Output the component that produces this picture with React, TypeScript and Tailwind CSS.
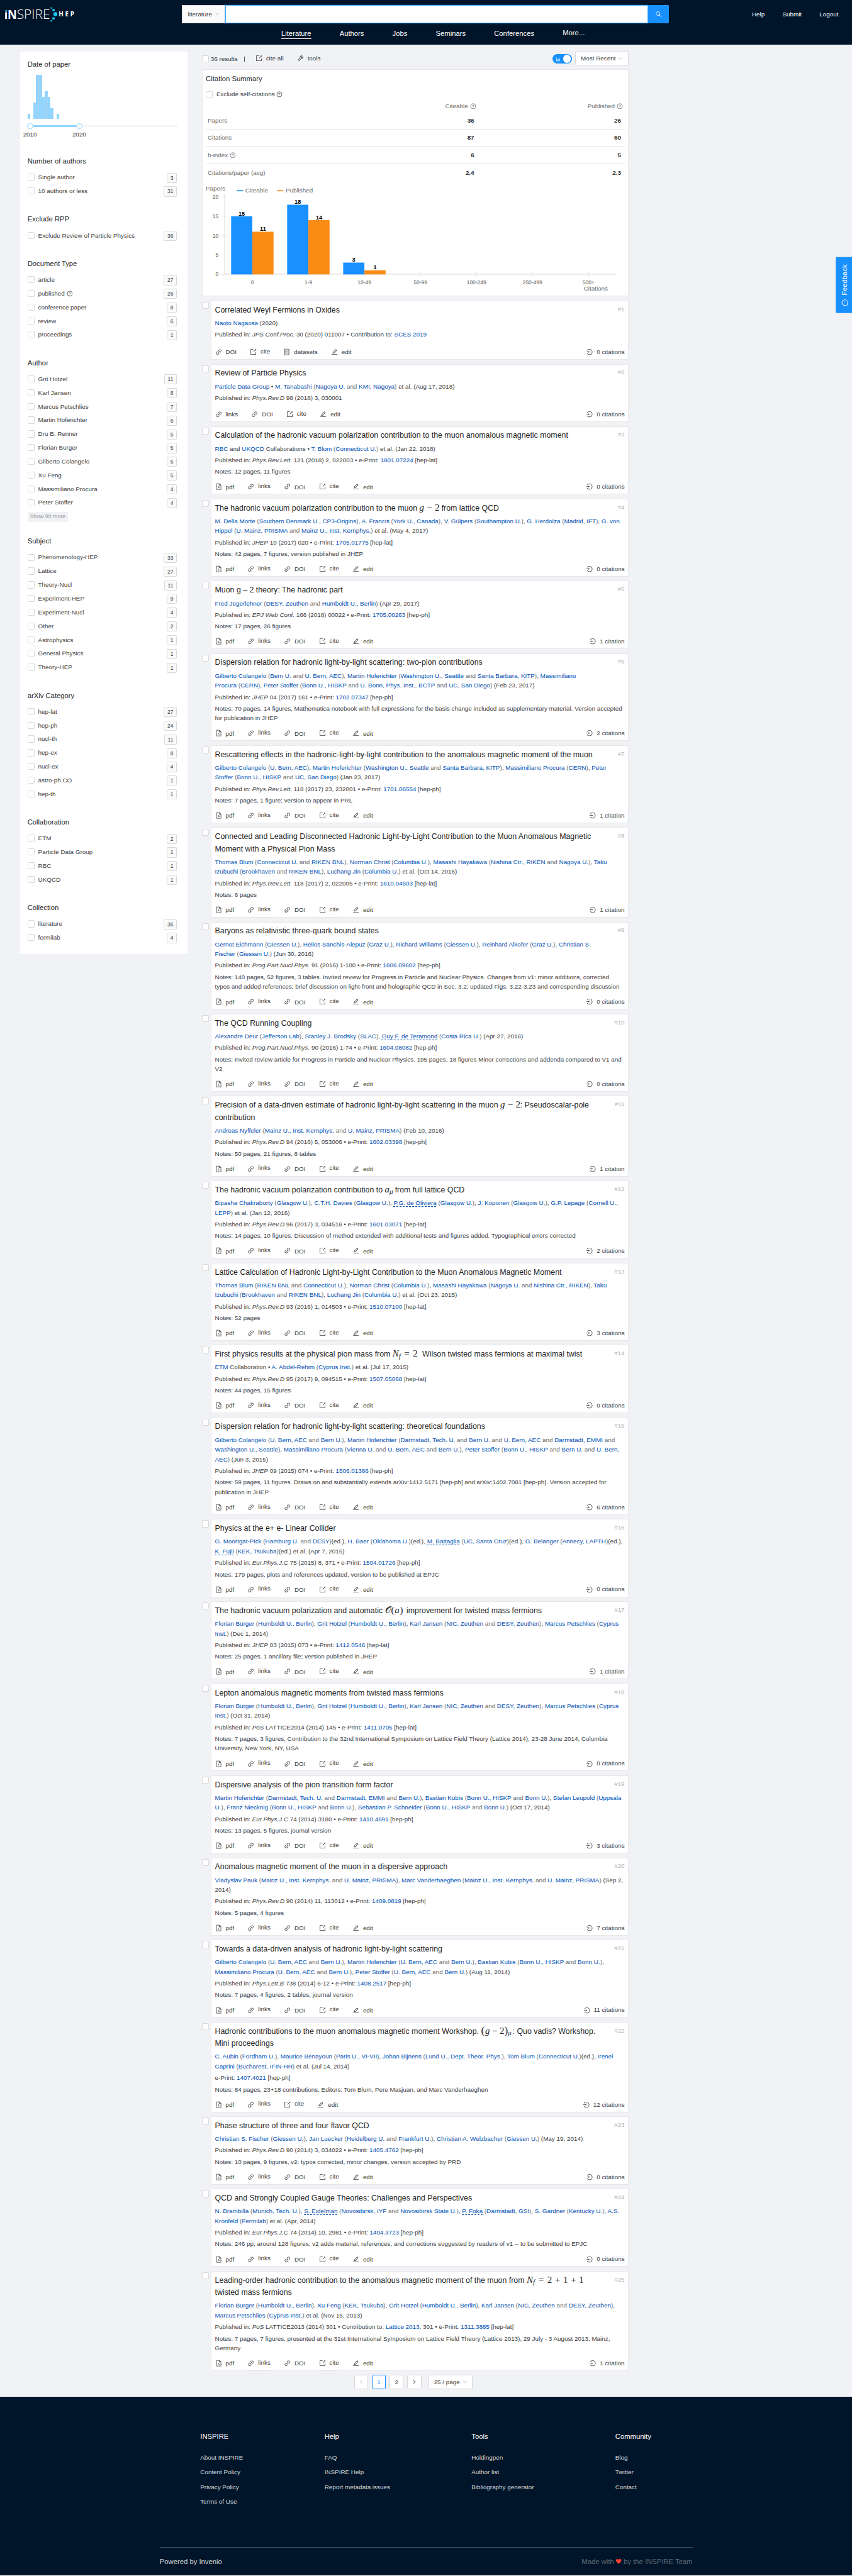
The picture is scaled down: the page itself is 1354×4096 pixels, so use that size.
import React from "react";
import {
  AiOutlineBarChart,
  AiOutlineDatabase,
  AiOutlineDown,
  AiOutlineEdit,
  AiOutlineExport,
  AiOutlineFilePdf,
  AiOutlineLeft,
  AiOutlineLink,
  AiOutlineLogin,
  AiOutlineMessage,
  AiOutlineQuestionCircle,
  AiOutlineRight,
  AiOutlineSearch,
  AiOutlineTool,
} from "react-icons/ai";

/* ---------- data ---------- */

type Paper = {
  title: React.ReactNode;
  collab?: string;
  authors: string;
  tail: string;
  pub: string;
  notes?: string;
  actions?: string[];
  cites: number;
  footer?: string;
};

const MATH = "font-['Liberation_Serif',serif] whitespace-nowrap inline-block leading-[0] text-[1.21em]";

function GMinus2() {
  return (
    <span className={MATH + " w-[45px]"}>
      <i>g</i>
      <span className="mx-[0.29em]">−</span>2
    </span>
  );
}

const papers: Paper[] = [
  {
    title: "Correlated Weyl Fermions in Oxides",
    authors: "Naoto Nagaosa",
    tail: " (2020)",
    pub: "Published in: *JPS Conf.Proc.* 30 (2020) 011007 • Contribution to: {SCES 2019}",
    actions: ["DOI", "cite", "datasets", "edit"],
    cites: 0,
    footer: "pt-[12.3px]",
  },
  {
    title: "Review of Particle Physics",
    collab: "{Particle Data Group} • ",
    authors: "M. Tanabashi (Nagoya U. & KMI, Nagoya)",
    tail: " et al. (Aug 17, 2018)",
    pub: "Published in: *Phys.Rev.D* 98 (2018) 3, 030001",
    actions: ["link", "DOI", "cite", "edit"],
    cites: 0,
    footer: "pt-[10px]",
  },
  {
    title: "Calculation of the hadronic vacuum polarization contribution to the muon anomalous magnetic moment",
    collab: "{RBC} and {UKQCD} Collaborations • ",
    authors: "T. Blum (Connecticut U.)",
    tail: " et al. (Jan 22, 2018)",
    pub: "Published in: *Phys.Rev.Lett.* 121 (2018) 2, 022003 • e-Print: {1801.07224} [hep-lat]",
    notes: "12 pages, 11 figures",
    cites: 0,
  },
  {
    title: (
      <>
        The hadronic vacuum polarization contribution to the muon <GMinus2 /> from lattice QCD
      </>
    ),
    authors:
      "M. Della Morte (Southern Denmark U., CP3-Origins); A. Francis (York U., Canada); V. Gülpers (Southampton U.); G. Herdoíza (Madrid, IFT); G. von\nHippel (U. Mainz, PRISMA & Mainz U., Inst. Kernphys.)",
    tail: " et al. (May 4, 2017)",
    pub: "Published in: *JHEP* 10 (2017) 020 • e-Print: {1705.01775} [hep-lat]",
    notes: "42 pages, 7 figures, version published in JHEP",
    cites: 0,
  },
  {
    title: "Muon g – 2 theory: The hadronic part",
    authors: "Fred Jegerlehner (DESY, Zeuthen & Humboldt U., Berlin)",
    tail: " (Apr 29, 2017)",
    pub: "Published in: *EPJ Web Conf.* 166 (2018) 00022 • e-Print: {1705.00263} [hep-ph]",
    notes: "17 pages, 26 figures",
    cites: 1,
  },
  {
    title: "Dispersion relation for hadronic light-by-light scattering: two-pion contributions",
    authors:
      "Gilberto Colangelo (Bern U. & U. Bern, AEC); Martin Hoferichter (Washington U., Seattle & Santa Barbara, KITP); Massimiliano\nProcura (CERN); Peter Stoffer (Bonn U., HISKP & U. Bonn, Phys. Inst., BCTP & UC, San Diego)",
    tail: " (Feb 23, 2017)",
    pub: "Published in: *JHEP* 04 (2017) 161 • e-Print: {1702.07347} [hep-ph]",
    notes:
      "70 pages, 14 figures, Mathematica notebook with full expressions for the basis change included as supplementary material. Version accepted for publication in JHEP",
    cites: 2,
  },
  {
    title: "Rescattering effects in the hadronic-light-by-light contribution to the anomalous magnetic moment of the muon",
    authors:
      "Gilberto Colangelo (U. Bern, AEC); Martin Hoferichter (Washington U., Seattle & Santa Barbara, KITP); Massimiliano Procura (CERN); Peter\nStoffer (Bonn U., HISKP & UC, San Diego)",
    tail: " (Jan 23, 2017)",
    pub: "Published in: *Phys.Rev.Lett.* 118 (2017) 23, 232001 • e-Print: {1701.06554} [hep-ph]",
    notes: "7 pages, 1 figure; version to appear in PRL",
    cites: 1,
  },
  {
    title:
      "Connected and Leading Disconnected Hadronic Light-by-Light Contribution to the Muon Anomalous Magnetic Moment with a Physical Pion Mass",
    authors:
      "Thomas Blum (Connecticut U. & RIKEN BNL); Norman Christ (Columbia U.); Masashi Hayakawa (Nishina Ctr., RIKEN & Nagoya U.); Taku\nIzubuchi (Brookhaven & RIKEN BNL); Luchang Jin (Columbia U.)",
    tail: " et al. (Oct 14, 2016)",
    pub: "Published in: *Phys.Rev.Lett.* 118 (2017) 2, 022005 • e-Print: {1610.04603} [hep-lat]",
    notes: "6 pages",
    cites: 1,
  },
  {
    title: "Baryons as relativistic three-quark bound states",
    authors:
      "Gernot Eichmann (Giessen U.); Helios Sanchis-Alepuz (Graz U.); Richard Williams (Giessen U.); Reinhard Alkofer (Graz U.); Christian S.\nFischer (Giessen U.)",
    tail: " (Jun 30, 2016)",
    pub: "Published in: *Prog.Part.Nucl.Phys.* 91 (2016) 1-100 • e-Print: {1606.09602} [hep-ph]",
    notes:
      "140 pages, 52 figures, 3 tables. Invited review for Progress in Particle and Nuclear Physics. Changes from v1: minor additions, corrected typos and added references; brief discussion on light-front and holographic QCD in Sec. 3.2; updated Figs. 3.22-3.23 and corresponding discussion",
    cites: 0,
  },
  {
    title: "The QCD Running Coupling",
    authors: "Alexandre Deur (Jefferson Lab); Stanley J. Brodsky (SLAC); _Guy F. de Teramond (Costa Rica U.)",
    tail: " (Apr 27, 2016)",
    pub: "Published in: *Prog.Part.Nucl.Phys.* 90 (2016) 1-74 • e-Print: {1604.08082} [hep-ph]",
    notes:
      "Invited review article for Progress in Particle and Nuclear Physics. 195 pages, 18 figures Minor corrections and addenda compared to V1 and V2",
    cites: 0,
  },
  {
    title: (
      <>
        Precision of a data-driven estimate of hadronic light-by-light scattering in the muon <GMinus2 />: Pseudoscalar-pole
        contribution
      </>
    ),
    authors: "Andreas Nyffeler (Mainz U., Inst. Kernphys. & U. Mainz, PRISMA)",
    tail: " (Feb 10, 2016)",
    pub: "Published in: *Phys.Rev.D* 94 (2016) 5, 053006 • e-Print: {1602.03398} [hep-ph]",
    notes: "50 pages, 21 figures, 8 tables",
    cites: 1,
  },
  {
    title: (
      <>
        The hadronic vacuum polarization contribution to{" "}
        <span className={MATH + " w-[18px]"}>
          <i>a</i>
          <i className="relative top-[0.2em] text-[0.75em]">μ</i>
        </span>{" "}
        from full lattice QCD
      </>
    ),
    authors:
      "Bipasha Chakraborty (Glasgow U.); C.T.H. Davies (Glasgow U.); _P.G. de Oliviera (Glasgow U.); J. Koponen (Glasgow U.); G.P. Lepage (Cornell U.,\nLEPP)",
    tail: " et al. (Jan 12, 2016)",
    pub: "Published in: *Phys.Rev.D* 96 (2017) 3, 034516 • e-Print: {1601.03071} [hep-lat]",
    notes: "14 pages, 10 figures. Discussion of method extended with additional tests and figures added. Typographical errors corrected",
    cites: 2,
  },
  {
    title: "Lattice Calculation of Hadronic Light-by-Light Contribution to the Muon Anomalous Magnetic Moment",
    authors:
      "Thomas Blum (RIKEN BNL & Connecticut U.); Norman Christ (Columbia U.); Masashi Hayakawa (Nagoya U. & Nishina Ctr., RIKEN); Taku\nIzubuchi (Brookhaven & RIKEN BNL); Luchang Jin (Columbia U.)",
    tail: " et al. (Oct 23, 2015)",
    pub: "Published in: *Phys.Rev.D* 93 (2016) 1, 014503 • e-Print: {1510.07100} [hep-lat]",
    notes: "52 pages",
    cites: 3,
  },
  {
    title: (
      <>
        First physics results at the physical pion mass from{" "}
        <span className={MATH + " w-[62px]"}>
          <i>N</i>
          <i className="relative top-[0.2em] text-[0.75em]">f</i>
          <span className="mx-[0.36em]">=</span>2
        </span>{" "}
        Wilson twisted mass fermions at maximal twist
      </>
    ),
    collab: "{ETM} Collaboration • ",
    authors: "A. Abdel-Rehim (Cyprus Inst.)",
    tail: " et al. (Jul 17, 2015)",
    pub: "Published in: *Phys.Rev.D* 95 (2017) 9, 094515 • e-Print: {1507.05068} [hep-lat]",
    notes: "44 pages, 15 figures",
    cites: 0,
  },
  {
    title: "Dispersion relation for hadronic light-by-light scattering: theoretical foundations",
    authors:
      "Gilberto Colangelo (U. Bern, AEC & Bern U.); Martin Hoferichter (Darmstadt, Tech. U. & Bern U. & U. Bern, AEC & Darmstadt, EMMI & Washington U., Seattle); Massimiliano Procura (Vienna U. & U. Bern, AEC & Bern U.); Peter Stoffer (Bonn U., HISKP & Bern U. & U. Bern,\nAEC)",
    tail: " (Jun 3, 2015)",
    pub: "Published in: *JHEP* 09 (2015) 074 • e-Print: {1506.01386} [hep-ph]",
    notes:
      "59 pages, 11 figures. Draws on and substantially extends arXiv:1412.5171 [hep-ph] and arXiv:1402.7081 [hep-ph]. Version accepted for publication in JHEP",
    cites: 6,
  },
  {
    title: "Physics at the e+ e- Linear Collider",
    authors:
      "G. Moortgat-Pick (Hamburg U. & DESY)!; H. Baer (Oklahoma U.)!; _M. Battaglia (UC, Santa Cruz)!; G. Belanger (Annecy, LAPTH)!; _K. Fujii (KEK, Tsukuba)!",
    tail: " et al. (Apr 7, 2015)",
    pub: "Published in: *Eur.Phys.J.C* 75 (2015) 8, 371 • e-Print: {1504.01726} [hep-ph]",
    notes: "179 pages, plots and references updated, version to be published at EPJC",
    cites: 0,
  },
  {
    title: (
      <>
        The hadronic vacuum polarization and automatic{" "}
        <span className={MATH + " w-[44px]"}>
          𝒪<span className="mx-[0.06em]">(</span>
          <i>a</i>
          <span className="ml-[0.04em]">)</span>
        </span>{" "}
        improvement for twisted mass fermions
      </>
    ),
    authors:
      "Florian Burger (Humboldt U., Berlin); Grit Hotzel (Humboldt U., Berlin); Karl Jansen (NIC, Zeuthen & DESY, Zeuthen); Marcus Petschlies (Cyprus\nInst.)",
    tail: " (Dec 1, 2014)",
    pub: "Published in: *JHEP* 03 (2015) 073 • e-Print: {1412.0546} [hep-lat]",
    notes: "25 pages, 1 ancillary file; version published in JHEP",
    cites: 1,
  },
  {
    title: "Lepton anomalous magnetic moments from twisted mass fermions",
    authors:
      "Florian Burger (Humboldt U., Berlin); Grit Hotzel (Humboldt U., Berlin); Karl Jansen (NIC, Zeuthen & DESY, Zeuthen); Marcus Petschlies (Cyprus\nInst.)",
    tail: " (Oct 31, 2014)",
    pub: "Published in: *PoS* LATTICE2014 (2014) 145 • e-Print: {1411.0705} [hep-lat]",
    notes:
      "7 pages, 3 figures, Contribution to the 32nd International Symposium on Lattice Field Theory (Lattice 2014), 23-28 June 2014, Columbia University, New York, NY, USA",
    cites: 0,
  },
  {
    title: "Dispersive analysis of the pion transition form factor",
    authors:
      "Martin Hoferichter (Darmstadt, Tech. U. & Darmstadt, EMMI & Bern U.); Bastian Kubis (Bonn U., HISKP & Bonn U.); Stefan Leupold (Uppsala\nU.); Franz Niecknig (Bonn U., HISKP & Bonn U.); Sebastian P. Schneider (Bonn U., HISKP & Bonn U.)",
    tail: " (Oct 17, 2014)",
    pub: "Published in: *Eur.Phys.J.C* 74 (2014) 3180 • e-Print: {1410.4691} [hep-ph]",
    notes: "13 pages, 5 figures, journal version",
    cites: 3,
  },
  {
    title: "Anomalous magnetic moment of the muon in a dispersive approach",
    authors:
      "Vladyslav Pauk (Mainz U., Inst. Kernphys. & U. Mainz, PRISMA); Marc Vanderhaeghen (Mainz U., Inst. Kernphys. & U. Mainz, PRISMA)",
    tail: " (Sep 2,\n2014)",
    pub: "Published in: *Phys.Rev.D* 90 (2014) 11, 113012 • e-Print: {1409.0819} [hep-ph]",
    notes: "5 pages, 4 figures",
    cites: 7,
  },
  {
    title: "Towards a data-driven analysis of hadronic light-by-light scattering",
    authors:
      "Gilberto Colangelo (U. Bern, AEC & Bern U.); Martin Hoferichter (U. Bern, AEC & Bern U.); Bastian Kubis (Bonn U., HISKP & Bonn U.); Massimiliano Procura (U. Bern, AEC & Bern U.); Peter Stoffer (U. Bern, AEC & Bern U.)",
    tail: " (Aug 11, 2014)",
    pub: "Published in: *Phys.Lett.B* 738 (2014) 6-12 • e-Print: {1408.2517} [hep-ph]",
    notes: "7 pages, 4 figures, 2 tables, journal version",
    cites: 11,
  },
  {
    title: (
      <>
        Hadronic contributions to the muon anomalous magnetic moment Workshop.{" "}
        <span className={MATH + " w-[71px]"}>
          <span className="mr-[0.04em] text-[1.15em]">(</span>
          <i>g</i>
          <span className="mx-[0.24em]">−</span>2<span className="text-[1.15em]">)</span>
          <i className="relative top-[0.2em] text-[0.7em]">μ</i>
        </span>
        : Quo vadis? Workshop. Mini proceedings
      </>
    ),
    authors:
      "C. Aubin (Fordham U.); Maurice Benayoun (Paris U., VI-VII); Johan Bijnens (Lund U., Dept. Theor. Phys.); Tom Blum (Connecticut U.)!; Irenel\nCaprini (Bucharest, IFIN-HH)",
    tail: " et al. (Jul 14, 2014)",
    pub: "e-Print: {1407.4021} [hep-ph]",
    notes: "84 pages, 23+18 contributions. Editors: Tom Blum, Pere Masjuan, and Marc Vanderhaeghen",
    actions: ["pdf", "links", "cite", "edit"],
    cites: 12,
  },
  {
    title: "Phase structure of three and four flavor QCD",
    authors: "Christian S. Fischer (Giessen U.); Jan Luecker (Heidelberg U. & Frankfurt U.); Christian A. Welzbacher (Giessen U.)",
    tail: " (May 19, 2014)",
    pub: "Published in: *Phys.Rev.D* 90 (2014) 3, 034022 • e-Print: {1405.4762} [hep-ph]",
    notes: "10 pages, 9 figures, v2: typos corrected, minor changes, version accepted by PRD",
    cites: 0,
  },
  {
    title: "QCD and Strongly Coupled Gauge Theories: Challenges and Perspectives",
    authors:
      "N. Brambilla (Munich, Tech. U.); _S. Eidelman (Novosibirsk, IYF & Novosibirsk State U.); _P. Foka (Darmstadt, GSI); S. Gardner (Kentucky U.); A.S.\nKronfeld (Fermilab)",
    tail: " et al. (Apr, 2014)",
    pub: "Published in: *Eur.Phys.J.C* 74 (2014) 10, 2981 • e-Print: {1404.3723} [hep-ph]",
    notes: "246 pp, around 128 figures; v2 adds material, references, and corrections suggested by readers of v1 -- to be submitted to EPJC",
    cites: 0,
  },
  {
    title: (
      <>
        Leading-order hadronic contribution to the anomalous magnetic moment of the muon from{" "}
        <span className={MATH + " w-[134px]"}>
          <i>N</i>
          <i className="relative top-[0.2em] text-[0.75em]">f</i>
          <span className="mx-[0.38em]">=</span>2<span className="mx-[0.31em]">+</span>1
          <span className="mx-[0.31em]">+</span>1
        </span>{" "}
        twisted mass fermions
      </>
    ),
    authors:
      "Florian Burger (Humboldt U., Berlin); Xu Feng (KEK, Tsukuba); Grit Hotzel (Humboldt U., Berlin); Karl Jansen (NIC, Zeuthen & DESY, Zeuthen); Marcus Petschlies (Cyprus Inst.)",
    tail: " et al. (Nov 15, 2013)",
    pub: "Published in: *PoS* LATTICE2013 (2014) 301 • Contribution to: {Lattice 2013}, 301 • e-Print: {1311.3885} [hep-lat]",
    notes:
      "7 pages, 7 figures, presented at the 31st International Symposium on Lattice Field Theory (Lattice 2013), 29 July - 3 August 2013, Mainz, Germany",
    cites: 1,
  },
];

const facets: { title: string; rows: [string, number][]; more?: string }[] = [
  { title: "Number of authors", rows: [["Single author", 3], ["10 authors or less", 31]] },
  { title: "Exclude RPP", rows: [["Exclude Review of Particle Physics", 36]] },
  {
    title: "Document Type",
    rows: [["article", 27], ["published", 26], ["conference paper", 8], ["review", 6], ["proceedings", 1]],
  },
  {
    title: "Author",
    rows: [
      ["Grit Hotzel", 11],
      ["Karl Jansen", 8],
      ["Marcus Petschlies", 7],
      ["Martin Hoferichter", 6],
      ["Dru B. Renner", 5],
      ["Florian Burger", 5],
      ["Gilberto Colangelo", 5],
      ["Xu Feng", 5],
      ["Massimiliano Procura", 4],
      ["Peter Stoffer", 4],
    ],
    more: "Show 90 more",
  },
  {
    title: "Subject",
    rows: [
      ["Phenomenology-HEP", 33],
      ["Lattice", 27],
      ["Theory-Nucl", 11],
      ["Experiment-HEP", 9],
      ["Experiment-Nucl", 4],
      ["Other", 2],
      ["Astrophysics", 1],
      ["General Physics", 1],
      ["Theory-HEP", 1],
    ],
  },
  {
    title: "arXiv Category",
    rows: [["hep-lat", 27], ["hep-ph", 24], ["nucl-th", 11], ["hep-ex", 8], ["nucl-ex", 4], ["astro-ph.CO", 1], ["hep-th", 1]],
  },
  { title: "Collaboration", rows: [["ETM", 2], ["Particle Data Group", 1], ["RBC", 1], ["UKQCD", 1]] },
  { title: "Collection", rows: [["literature", 36], ["fermilab", 4]] },
];

/* ---------- small pieces ---------- */

function Box({ className = "" }: { className?: string }) {
  return <span className={"block size-4 shrink-0 rounded-[2px] border border-[#d9d9d9] bg-white " + className} />;
}

function Rich({ text }: { text: string }) {
  return (
    <>
      {text.split(/(\*[^*]+\*|\{[^}]+\})/).map((part, i) => {
        if (part.startsWith("*")) return <i key={i}>{part.slice(1, -1)}</i>;
        if (part.startsWith("{")) return <a key={i} className="text-[#0050b3]">{part.slice(1, -1)}</a>;
        return <span key={i}>{part}</span>;
      })}
    </>
  );
}

function Authors({ list }: { list: string }) {
  return (
    <>
      {list.split("; ").map((entry, i, all) => {
        const m = entry.match(/^(_?)([^(]+?)(?: \(([\s\S]*)\))?(!?)$/)!;
        const affs = m[3] ? m[3].split(" & ") : [];
        return (
          <React.Fragment key={i}>
            <a className={m[1] ? "text-[#0050b3] underline decoration-dashed underline-offset-[3px]" : "text-[#0050b3]"}>{m[2]}</a>
            {affs.length > 0 && (
              <span className="text-[#6b6b6b]">
                {" ("}
                {affs.map((a, j) => (
                  <React.Fragment key={j}>
                    {j > 0 && " and "}
                    <a className="text-[#0050b3]">{a}</a>
                  </React.Fragment>
                ))}
                )
              </span>
            )}
            {m[4] && "(ed.)"}
            {i < all.length - 1 && ", "}
          </React.Fragment>
        );
      })}
    </>
  );
}

function Action({ kind }: { kind: string }) {
  const label = kind === "link" ? "links" : kind;
  const raised = kind === "links" || kind === "cite";
  const Icon =
    kind === "pdf"
      ? AiOutlineFilePdf
      : kind === "cite"
        ? AiOutlineExport
        : kind === "datasets"
          ? AiOutlineDatabase
          : kind === "edit"
            ? AiOutlineEdit
            : AiOutlineLink;
  return (
    <span className={raised ? "flex h-8 items-center gap-2 shadow-[0_2px_0_rgba(0,0,0,0.015)]" : "flex h-8 items-center gap-2"}>
      <Icon className="size-4 shrink-0" />
      <span className={raised ? "pb-[3px]" : "pt-px"}>{label}</span>
    </span>
  );
}

function Result({ paper, index }: { paper: Paper; index: number }) {
  const actions = paper.actions ?? ["pdf", "links", "DOI", "cite", "edit"];
  return (
    <div className="mb-[9.1px] flex items-start">
      <Box className="mt-[3px] mr-[4.5px]" />
      <article className="min-w-0 flex-1 border border-[#e8e8e8] bg-white px-[7.6px] pt-[7px] text-[#3d3d3d]">
        <div className="flex justify-between">
          <h3 className="w-[880px] text-[17.55px] leading-[27.5px] text-[#1f1f1f]">{paper.title}</h3>
          <span className="text-[#b3b3b3]">{`#${index}`}</span>
        </div>
        <div className="mt-1 whitespace-pre-line">
          {paper.collab && <Rich text={paper.collab} />}
          <Authors list={paper.authors} />
          {paper.tail}
        </div>
        <div className="mt-1">
          <Rich text={paper.pub} />
        </div>
        {paper.notes && <div className="mt-1">{`Notes: ${paper.notes}`}</div>}
        <div className={"flex justify-between " + (paper.footer ?? "pt-[7px]")}>
          <div className="flex gap-[30px]">
            {actions.map((a) => (
              <Action key={a} kind={a} />
            ))}
          </div>
          <span className="flex h-8 items-center gap-2">
            <AiOutlineLogin className="size-4" />
            {`${paper.cites} ${paper.cites === 1 ? "citation" : "citations"}`}
          </span>
        </div>
      </article>
    </div>
  );
}

/* ---------- header ---------- */

function Logo() {
  return (
    <svg className="mt-4 ml-3 h-[34px] w-[158px] overflow-visible" viewBox="0 0 158 34" fill="none">
      <g fill="#fff" fontFamily="'Open Sans', sans-serif">
        <rect x="0.3" y="12" width="4" height="15" />
        <text x="5.8" y="27" fontSize="28" fontWeight="700" textLength="21" lengthAdjust="spacingAndGlyphs">N</text>
        <text x="26.5" y="27" fontSize="28" fontWeight="300" textLength="75" lengthAdjust="spacingAndGlyphs">SPIRE</text>
        <text x="121" y="21" fontSize="14" fontWeight="700" textLength="35" lengthAdjust="spacing">HEP</text>
      </g>
      <g fill="#13c8f5">
        <circle cx="2.3" cy="8.8" r="2.2" />
        <circle cx="104.3" cy="2.5" r="1.8" />
        <circle cx="109.3" cy="7.2" r="2.9" />
        <circle cx="113.5" cy="16.3" r="4.5" />
        <circle cx="109.3" cy="25.8" r="2.9" />
        <circle cx="104.3" cy="31.4" r="1.8" />
      </g>
    </svg>
  );
}

function Header() {
  const nav = ["Literature", "Authors", "Jobs", "Seminars", "Conferences", "More..."];
  return (
    <header className="h-[100px] bg-[#001529] text-white">
      <div className="flex h-16">
        <div className="w-[410px]">
          <Logo />
        </div>
        <div className="mt-3 flex h-10 w-[1098px]">
          <div className="flex w-[98px] items-center justify-between border border-[#d9d9d9] bg-[#fafafa] pr-[11px] pl-3 text-[#404040]">
            literature
            <AiOutlineDown className="size-3 text-[#bfbfbf]" />
          </div>
          <div className="z-10 flex-1 border border-[#40a9ff] bg-white shadow-[0_0_0_2px_rgba(24,144,255,0.2)]" />
          <div className="flex w-[47px] items-center justify-center rounded-r-[2px] bg-[#1890ff]">
            <AiOutlineSearch className="size-4" />
          </div>
        </div>
        <div className="flex h-16 flex-1 items-center justify-end gap-10 pr-[31px]">
          <span>Help</span>
          <span>Submit</span>
          <span>Logout</span>
        </div>
      </div>
      <nav className="flex gap-16 pt-[1px] pl-[634px] text-base leading-[22px]">
        {nav.map((n, i) => (
          <span key={n} className={i === 0 ? "border-b-2 border-white" : i === 5 ? "-mt-px" : ""}>
            {n}
          </span>
        ))}
      </nav>
    </header>
  );
}

/* ---------- sidebar ---------- */

const histogram = [1, 0, 3, 8, 8, 4, 5, 4, 2, 0, 1];

function DateFacet() {
  return (
    <section className="h-[219px]">
      <h2 className="text-base leading-6 text-[#262626]">Date of paper</h2>
      <div className="mt-3 flex h-[99.5px] items-end">
        {histogram.map((n, i) => (
          <span key={i} className="w-[6.52px] border-[#a5d4f2] bg-[#91d5ff]" style={{ height: n * 12.45, borderRightWidth: n ? 1 : 0 }} />
        ))}
      </div>
      <div className="relative mt-[14px] h-1 w-[340px] rounded-sm bg-[#f5f5f5]">
        <div className="ml-[6px] h-1 w-[111px] bg-[#91d5ff]" />
        <span className="absolute -top-[5px] -left-px size-[14px] rounded-full border-2 border-[#91d5ff] bg-white" />
        <span className="absolute -top-[5px] left-[110px] size-[14px] rounded-full border-2 border-[#91d5ff] bg-white" />
      </div>
      <div className="mt-[6px] -ml-[10px] flex gap-[80px] text-[#404040]">
        <span className="w-[31px]">2010</span>
        <span>2020</span>
      </div>
    </section>
  );
}

function Sidebar() {
  return (
    <aside className="mt-4 ml-[46px] h-[2036px] w-[377px] bg-white pt-[17px] pr-6 pl-4 text-[#404040]">
      <DateFacet />
      {facets.map((f) => (
        <section key={f.title} className={f.more ? "mb-[32px]" : "mb-[36.5px]"}>
          <h2 className="mb-[8.5px] text-base leading-6 text-[#262626]">{f.title}</h2>
          {f.rows.map(([name, count]) => (
            <div key={name} className="flex h-[31px] items-center">
              <Box />
              <span className="ml-2 flex flex-1 items-center gap-1">
                {name}
                {name === "published" && <AiOutlineQuestionCircle className="size-[14px]" />}
              </span>
              <span className="mt-[2px] rounded-[2px] border border-[#d9d9d9] bg-[#fafafa] px-[7px] text-xs leading-5">{count}</span>
            </div>
          ))}
          {f.more && (
            <div className="mt-[5px] flex h-[23px] w-[91px] items-center justify-center rounded-[2px] bg-[#f0f2f5] text-[12.5px] text-[#999]">
              {f.more}
            </div>
          )}
        </section>
      ))}
    </aside>
  );
}

/* ---------- citation summary ---------- */

const buckets: [string, number, number][] = [
  ["0", 15, 11],
  ["1-9", 18, 14],
  ["10-49", 3, 1],
  ["50-99", 0, 0],
  ["100-249", 0, 0],
  ["250-499", 0, 0],
  ["500+", 0, 0],
];

function Chart() {
  const base = 207;
  const unit = 8.7;
  return (
    <svg className="mt-[2.6px] block h-[250px] w-[944px]" viewBox="0 0 944 250" fontFamily="'Liberation Sans', sans-serif">
      <g fontSize="14" fill="#6b6b6b">
        <text x="0" y="18.5">Papers</text>
        <text x="89" y="22">Citeable</text>
        <text x="180" y="22">Published</text>
        <text x="852" y="244">Citations</text>
      </g>
      <rect x="70" y="17.5" width="14" height="2.5" fill="#1890ff" />
      <rect x="161" y="17.5" width="14" height="2.5" fill="#fa8c16" />
      <path d={`M42.5 27V${base}`} stroke="#e6e6e9" strokeWidth="2" />
      <path d={`M36 ${base}H926`} stroke="#e6e6e9" strokeWidth="2" />
      {[0, 5, 10, 15, 20].map((v) => (
        <g key={v}>
          <path d={`M36 ${base - v * unit}H47`} stroke="#e6e6e9" strokeWidth="1.5" />
          <text x="28.5" y={base - v * unit + 4.3} fontSize="12" textAnchor="end" fill="#595959">
            {v}
          </text>
        </g>
      ))}
      {buckets.map(([label, a, b], i) => {
        const x = 105 + i * 126.3;
        return (
          <g key={label}>
            <path d={`M${x} 201V213`} stroke="#e6e6e9" strokeWidth="1.5" />
            <text x={x} y="229.3" fontSize="12" textAnchor="middle" fill="#595959">
              {label}
            </text>
            {a > 0 && (
              <>
                <rect x={x - 47.8} y={base - a * unit} width="47.8" height={a * unit + 0.6} fill="#1890ff" />
                <rect x={x} y={base - b * unit} width="47.8" height={b * unit + 0.6} fill="#fa8c16" />
                <text x={x - 24} y={base - a * unit - 2} fontSize="13" fontWeight="700" textAnchor="middle" fill="#000">
                  {a}
                </text>
                <text x={x + 24} y={base - b * unit - 2} fontSize="13" fontWeight="700" textAnchor="middle" fill="#000">
                  {b}
                </text>
              </>
            )}
          </g>
        );
      })}
    </svg>
  );
}

function Summary() {
  const rows: [string, string, string][] = [
    ["Papers", "36", "26"],
    ["Citations", "87", "60"],
    ["h-index", "6", "5"],
    ["Citations/paper (avg)", "2.4", "2.3"],
  ];
  return (
    <section className="mb-[10px] h-[512px] border border-[#e8e8e8] bg-white px-[7.6px] pt-[7.6px] text-[#6b6b6b]">
      <h2 className="text-base leading-[26px] text-[#262626]">Citation Summary</h2>
      <div className="mt-[11px] flex h-[22px] items-center gap-2 text-[#404040]">
        <Box />
        <span className="flex items-center gap-1">
          Exclude self-citations
          <AiOutlineQuestionCircle className="size-[14px]" />
        </span>
      </div>
      <div className="mt-[4px] grid h-[22px] grid-cols-[278px_331px_331px]">
        <span />
        {["Citeable", "Published"].map((h) => (
          <span key={h} className="flex items-center justify-end gap-1">
            {h}
            <AiOutlineQuestionCircle className="size-[14px]" />
          </span>
        ))}
      </div>
      <div className="mt-[3px]">
        {rows.map(([label, a, b], i) => (
          <div
            key={label}
            className={
              i < 3
                ? "grid h-[39px] grid-cols-[278px_331px_331px] items-center border-b border-[#e6e6e6]"
                : "grid h-[39px] grid-cols-[278px_331px_331px] items-center"
            }
          >
            <span className="flex items-center gap-1 pl-1">
              {label}
              {i === 2 && <AiOutlineQuestionCircle className="size-[14px]" />}
            </span>
            <b className="pr-1 text-right text-[#333]">{a}</b>
            <b className="pr-1 text-right text-[#333]">{b}</b>
          </div>
        ))}
      </div>
      <Chart />
    </section>
  );
}

function Toolbar() {
  return (
    <div className="flex h-[56px] items-start pt-4 text-[#404040]">
      <Box className="mt-[9px] mr-1" />
      <span className="mt-[6px]">36 results</span>
      <span className="mt-[11px] mx-[15px] h-[12px] w-px bg-[#555]" />
      <span className="mt-0 ml-[9px] flex h-8 items-center gap-2 shadow-[0_2px_0_rgba(0,0,0,0.015)]">
        <AiOutlineExport className="size-4" />
        <span className="pb-[2px]">cite all</span>
      </span>
      <span className="mt-0 ml-[30px] flex h-8 items-center gap-2 shadow-[0_2px_0_rgba(0,0,0,0.015)]">
        <AiOutlineTool className="size-4" />
        <span className="pb-[2px]">tools</span>
      </span>
      <span className="mt-[6px] mr-2 ml-auto flex h-[22px] w-11 items-center justify-between rounded-full bg-[#1890ff] pr-[2px] pl-[7px]">
        <AiOutlineBarChart className="size-3 text-white" />
        <span className="size-[18px] rounded-full bg-white" />
      </span>
      <span className="flex h-8 w-[120px] items-center justify-between rounded-[2px] border border-[#d9d9d9] bg-white pr-[10px] pl-[11px]">
        Most Recent
        <AiOutlineDown className="size-3 text-[#bfbfbf]" />
      </span>
    </div>
  );
}

function Pagination() {
  const cell = "flex size-8 items-center justify-center rounded-[2px] border bg-white ";
  return (
    <div className="flex gap-2 pl-[343px] text-[#404040]">
      <span className={cell + "border-[#d9d9d9] text-[#bfbfbf]"}>
        <AiOutlineLeft className="size-3" />
      </span>
      <span className={cell + "border-[#1890ff] text-[#1890ff]"}>1</span>
      <span className={cell + "border-[#d9d9d9]"}>2</span>
      <span className={cell + "border-[#d9d9d9]"}>
        <AiOutlineRight className="size-3" />
      </span>
      <span className="ml-2 flex h-8 w-[100px] items-center justify-between rounded-[2px] border border-[#d9d9d9] bg-white pr-[10px] pl-[11px] whitespace-nowrap">
        25 / page
        <AiOutlineDown className="size-3 text-[#bfbfbf]" />
      </span>
    </div>
  );
}

/* ---------- footer ---------- */

function Footer() {
  const cols: [string, string, string[]][] = [
    ["INSPIRE", "w-[280px]", ["About INSPIRE", "Content Policy", "Privacy Policy", "Terms of Use"]],
    ["Help", "w-[331.3px]", ["FAQ", "INSPIRE Help", "Report metadata issues"]],
    ["Tools", "w-[324.2px]", ["Holdingpen", "Author list", "Bibliography generator"]],
    ["Community", "", ["Blog", "Twitter", "Contact"]],
  ];
  return (
    <footer className="h-[405px] bg-[#001529] px-[360px] pt-[79px] text-[#d4d8dc]">
      <div className="flex h-[261px] pl-[91.5px]">
        {cols.map(([title, width, links]) => (
          <div key={title} className={width}>
            <h2 className="mb-[24px] text-base leading-6 text-white">{title}</h2>
            {links.map((l) => (
              <div key={l} className="mb-[11px]">
                {l}
              </div>
            ))}
          </div>
        ))}
      </div>
      <div className="flex justify-between border-t border-[#3f4f5f] pt-[19px] text-base leading-6">
        <span>Powered by Invenio</span>
        <span className="flex items-center gap-[5px] text-[#5e6b78]">
          Made with
          <svg className="h-[11px] w-3" viewBox="0 0 12 11" fill="#ff4136">
            <path d="M6 11C5 9.6 0 6.6 0 3.2 0 1.2 1.4 0 3 0c1.300 0 2.400.8 3 2 .6-1.200 1.700-2 3-2 1.600 0 3 1.200 3 3.200C12 6.600 7 9.600 6 11Z" />
          </svg>
          by the INSPIRE Team
        </span>
      </div>
    </footer>
  );
}

export default function App() {
  return (
    <div className="relative h-[5809px] w-[1921px] overflow-hidden bg-[#f0f2f5] font-['Liberation_Sans',Arial,sans-serif] text-sm leading-[22px] [zoom:0.705]">
      <Header />
      <div className="flex h-[5305px] items-start">
        <Sidebar />
        <main className="ml-[32px] w-[962px]">
          <Toolbar />
          <Summary />
          {papers.map((p, i) => (
            <Result key={i} paper={p} index={i + 1} />
          ))}
          <Pagination />
        </main>
      </div>
      <Footer />
      <div className="absolute top-[580px] -right-[3px] flex h-[126px] w-10 rotate-180 items-center gap-2 rounded-[2px] bg-[#1890ff] pt-4 text-base text-white [writing-mode:vertical-rl]">
        <AiOutlineMessage className="size-4 rotate-90" />
        Feedback
      </div>
    </div>
  );
}
